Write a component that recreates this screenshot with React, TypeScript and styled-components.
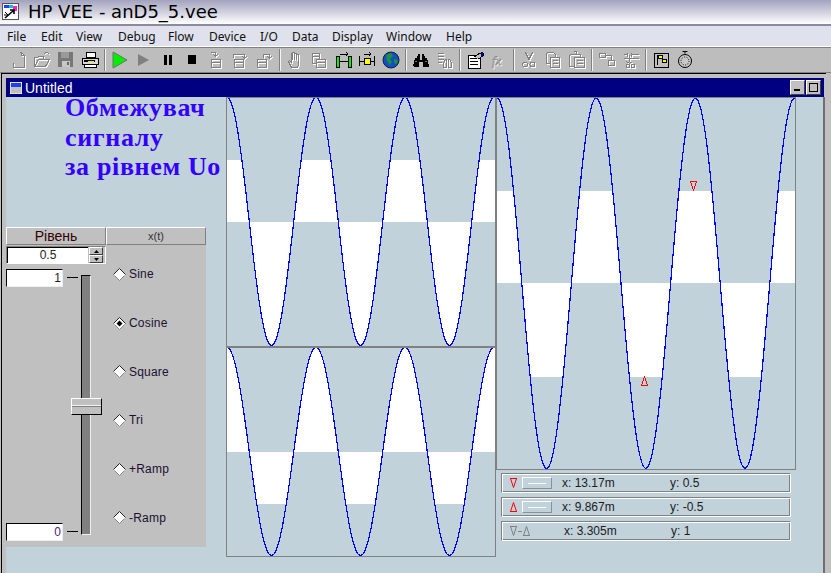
import React from 'react'
import styled, { createGlobalStyle } from 'styled-components'

const GlobalStyle = createGlobalStyle`
  html, body { margin: 0; padding: 0; background: #c0c0c0; overflow: hidden; }
  body { font-family: "Liberation Sans", Arial, sans-serif; }
`

const Page = styled.div`
  width: 831px;
  height: 573px;
  display: flex;
  flex-direction: column;
  overflow: hidden;
`

const AppTitle = styled.div`
  height: 26px;
  flex: none;
  display: flex;
  align-items: center;
  gap: 9px;
  padding: 0 0 2px 2px;
  box-sizing: border-box;
  background: linear-gradient(#a2a2be, #ffffff);
  border-bottom: 2px solid #8b8b9c;
  font-family: "DejaVu Sans", sans-serif;
  font-size: 18px;
  color: #000;
`

const MenuBar = styled.div`
  height: 20px;
  flex: none;
  display: flex;
  align-items: center;
  padding-left: 7px;
  background: #dfe2ec;
  border-bottom: 1px solid #fff;
  font-family: "Noto Sans", sans-serif;
  font-size: 12px;
  color: #111;
`

const MenuItem = styled.span<{ $w: number }>`
  width: ${(p) => p.$w}px;
`

const ToolBar = styled.div`
  height: 24px;
  flex: none;
  display: flex;
  align-items: center;
  padding-left: 6px;
  background: #bdbdbd;
  border-top: 1px solid #808080;
  border-bottom: 1px solid #808080;
`

const ToolSlot = styled.div<{ $w?: number }>`
  width: ${(p) => p.$w ?? 24.05}px;
  height: 22px;
  display: flex;
  align-items: center;
  justify-content: center;
`

const ToolSep = styled.div`
  width: 1px;
  height: 22px;
  margin: 0 2px;
  background: #808080;
  border-right: 1px solid #f4f4f4;
`

const Frame = styled.div`
  flex: 1;
  display: flex;
  flex-direction: column;
  margin: 0 5px 0 1px;
  padding: 4px 2px 0 4px;
  border-top: 1px solid #000;
  border-left: 1px solid #000;
  background: #c0c0c0;
  min-height: 0;
`

const WindowBar = styled.div`
  height: 19px;
  flex: none;
  display: flex;
  align-items: center;
  padding: 0 3px 0 4px;
  background: #000080;
  color: #fff;
  font-size: 14px;
`

const WindowTitle = styled.span`
  margin-left: 3px;
  flex: 1;
`

const WinButton = styled.div`
  width: 15px;
  height: 15px;
  box-sizing: border-box;
  margin-left: 1px;
  display: flex;
  align-items: center;
  justify-content: center;
  background: #c0c0c0;
  border: 1px solid;
  border-color: #fff #404040 #404040 #fff;
`

const Canvas = styled.div`
  flex: 1;
  min-height: 0;
  display: flex;
  background: #c2d2da;
  margin-right: -1px;
  border-right: 2px solid #6f6f6f;
`

const LeftColumn = styled.div`
  width: 220px;
  flex: none;
  display: flex;
  flex-direction: column;
`

const Heading = styled.div`
  height: 134px;
  margin-top: -4px;
  padding-left: 59px;
  font-family: "Liberation Serif", serif;
  font-weight: bold;
  font-size: 26px;
  line-height: 29.5px;
  letter-spacing: 0.65px;
  color: #3300ff;
  white-space: nowrap;
`

const Panel = styled.div`
  width: 200px;
  height: 320px;
  background: #c0c0c0;
  display: flex;
  flex-direction: column;
`

const PanelHead = styled.div`
  display: flex;
  height: 18px;
  flex: none;
`

const HeadCell = styled.div<{ $dim?: boolean }>`
  width: 100px;
  box-sizing: border-box;
  display: flex;
  align-items: center;
  justify-content: center;
  border: 1px solid;
  border-color: #fff #808080 #808080 #fff;
  font-size: ${(p) => (p.$dim ? 11 : 14)}px;
  color: ${(p) => (p.$dim ? '#333' : '#300')};
`

const PanelBody = styled.div`
  flex: 1;
  display: flex;
`

const LevelColumn = styled.div`
  width: 100px;
  padding-top: 1px;
`

const Spinner = styled.div`
  width: 100px;
  height: 18px;
  box-sizing: border-box;
  display: flex;
  border: 1px solid #fff;
  border-color: #808080 #fff #fff #808080;
`

const SpinValue = styled.div`
  flex: 1;
  background: #fff;
  border-top: 1px solid #000;
  border-left: 1px solid #000;
  text-align: center;
  font-size: 12px;
  line-height: 15px;
  color: #222;
`

const SpinButtons = styled.div`
  width: 14px;
  margin-left: 1px;
  margin-right: 2px;
  display: flex;
  flex-direction: column;
`

const SpinButton = styled.div`
  flex: 1;
  background: #c0c0c0;
  border: 1px solid;
  border-color: #fff #404040 #404040 #fff;
  display: flex;
  align-items: center;
  justify-content: center;
`

const SliderRow = styled.div`
  display: flex;
  height: 272px;
  margin-top: 5px;
`

const BoundsColumn = styled.div`
  width: 57px;
  display: flex;
  flex-direction: column;
  justify-content: space-between;
`

const BoundInput = styled.div<{ $pink?: boolean }>`
  height: 18px;
  box-sizing: border-box;
  background: #fff;
  border: 1px solid;
  border-color: #000 #eee #eee #000;
  text-align: right;
  padding-right: 1px;
  font-size: 12px;
  line-height: 16px;
  color: ${(p) => (p.$pink ? '#502080' : '#222')};
`

const TickColumn = styled.div`
  width: 11px;
  margin-left: 4px;
  padding: 8px 0 9px;
  display: flex;
  flex-direction: column;
  justify-content: space-between;
`

const Tick = styled.div`
  height: 1px;
  background: #000;
`

const Track = styled.div`
  position: relative;
  width: 10px;
  height: 260px;
  margin: 6px 0 0 3px;
  box-sizing: border-box;
  background: #808080;
  border: 1px solid;
  border-color: #000 #f0f0f0 #f0f0f0 #000;
`

const Thumb = styled.div`
  position: absolute;
  left: -11px;
  top: 122px;
  width: 31px;
  height: 17px;
  box-sizing: border-box;
  background: linear-gradient(#c0c0c0 6px, #f4f4f4 6px, #f4f4f4 7px, #808080 7px, #808080 8px, #c0c0c0 8px);
  border: 1px solid;
  border-color: #fff #000 #000 #fff;
`

const RadioColumn = styled.div`
  width: 100px;
  padding-top: 5px;
  display: flex;
  flex-direction: column;
`

const RadioRow = styled.div`
  height: 48.7px;
  display: flex;
  align-items: center;
  padding-left: 7px;
  gap: 3px;
  font-size: 12px;
  letter-spacing: 0.2px;
  color: #1a1030;
`

const MiddleColumn = styled.div`
  width: 270px;
  flex: none;
  display: flex;
  flex-direction: column;
`

const PlotBox = styled.div`
  box-sizing: border-box;
  border: 1px solid #808080;
  flex: none;
`

const PlotSvg = styled.svg`
  display: block;
  overflow: hidden;
`

const RightColumn = styled.div`
  width: 300px;
  flex: none;
  display: flex;
  flex-direction: column;
`

const MarkerList = styled.div`
  display: flex;
  flex-direction: column;
  gap: 4px;
  margin: 3px 0 0 5px;
`

const MarkerRow = styled.div`
  width: 290px;
  height: 20px;
  box-sizing: border-box;
  display: flex;
  align-items: center;
  border: 1px solid;
  border-color: #808080 #fff #fff #808080;
  box-shadow: inset 0 1px 0 #fff, inset 1px 0 0 #fff, inset -1px 0 0 #808080, inset 0 -1px 0 #808080;
  font-size: 12px;
  color: #1c1c1c;
`

const MarkerIcon = styled.div<{ $w: number }>`
  width: ${(p) => p.$w}px;
  margin-left: 7px;
  display: flex;
  align-items: center;
  flex: none;
`

const MarkerButton = styled.div`
  width: 30px;
  height: 12px;
  box-sizing: border-box;
  margin-left: 2px;
  margin-right: 10px;
  display: flex;
  align-items: center;
  justify-content: center;
  border: 1px solid;
  border-color: #fff #8a9098 #8a9098 #fff;
`

const MarkerDash = styled.div`
  width: 18px;
  height: 1px;
  background: #fff;
`

const MarkerValue = styled.span<{ $w: number }>`
  width: ${(p) => p.$w}px;
  flex: none;
`

type CurveProps = {
  w: number
  h: number
  period: number
  zero: number
  amp: number
  clipTop: number
  clipBottom: number
  id: string
  children?: React.ReactNode
}

function Curve({ w, h, period, zero, amp, clipTop, clipBottom, id, children }: CurveProps) {
  const pts: string[] = []
  for (let x = 0; x <= w; x += 1) {
    const y = zero - amp * Math.cos((2 * Math.PI * x) / period)
    pts.push(`${x},${y.toFixed(1)}`)
  }
  const line = pts.join(' ')
  return (
    <PlotSvg width={w} height={h} viewBox={`0 0 ${w} ${h}`}>
      <clipPath id={id}>
        <rect x="0" y={clipTop} width={w} height={clipBottom - clipTop} />
      </clipPath>
      <polygon points={`${line} ${w},${zero} 0,${zero}`} fill="#fff" clipPath={`url(#${id})`} shapeRendering="crispEdges" />
      <polyline points={line} fill="none" stroke="#0000ff" strokeWidth="1.2" shapeRendering="crispEdges" />
      {children}
    </PlotSvg>
  )
}

function Radio({ on }: { on?: boolean }) {
  return (
    <svg width="13" height="13" viewBox="0 0 13 13">
      <polygon points="6.5,0.5 12.5,6.5 6.5,12.5 0.5,6.5" fill="#fff" />
      <polyline points="0.5,6.5 6.5,0.5 12.5,6.5" fill="none" stroke="#222" />
      <polyline points="1.5,7.5 6.5,12.5 11.5,7.5" fill="none" stroke="#8a8a8a" />
      {on && <polygon points="6.5,3.5 9.5,6.5 6.5,9.5 3.5,6.5" fill="#000" />}
    </svg>
  )
}

// disabled toolbar pictures: a white copy behind a grey one
function Etched({ children }: { children: React.ReactNode }) {
  return (
    <svg width="22" height="22" viewBox="0 0 22 22" fill="none" strokeWidth="1" shapeRendering="crispEdges">
      <g stroke="#fff" transform="translate(1 1)">{children}</g>
      <g stroke="#808080">{children}</g>
    </svg>
  )
}

function Pic({ children }: { children: React.ReactNode }) {
  return (
    <svg width="22" height="22" viewBox="0 0 22 22" fill="none" shapeRendering="crispEdges">
      {children}
    </svg>
  )
}

const toolGroups: React.ReactNode[][] = [
  [
    <Etched><path d="M12.5 3.5h2l3 3v12h-11v-5" /><path d="M14.5 3.5v3h3" /></Etched>,
    <Etched><path d="M3.5 17.5v-9h3l1-1h5v2M3.5 17.5h11l4-7h-11l-4 7" /><path d="M12.5 5.5l2-2h2l2 2" /></Etched>,
    <Pic><rect x="3" y="3" width="15" height="15" fill="#777" /><rect x="6" y="3" width="8" height="6" fill="#9a9a9a" /><rect x="7" y="12" width="8" height="6" fill="#c8c8c8" /><rect x="12" y="13" width="2" height="3" fill="#666" /></Pic>,
    <Pic><path d="M7 3h9v5H7z" fill="#fff" stroke="#000" /><path d="M3 9h16v6H3z" fill="#d8d8d8" stroke="#000" /><path d="M5 15h12v3H5z" fill="#fff" stroke="#000" /><path d="M5 11h11v2H5z" fill="#000" /><path d="M9 12h6v1H9z" fill="#ffe000" /></Pic>,
  ],
  [
    <svg width="22" height="22" viewBox="0 0 22 22"><polygon points="4,3 18,11 4,19" fill="#00f000" stroke="#707070" /></svg>,
    <svg width="22" height="22" viewBox="0 0 22 22"><polygon points="5,5 16,11 5,17" fill="#808080" /></svg>,
    <Pic><rect x="7" y="6" width="3" height="10" fill="#000" /><rect x="12" y="6" width="3" height="10" fill="#000" /></Pic>,
    <Pic><rect x="7" y="6" width="8" height="9" fill="#000" /></Pic>,
    <Etched><path d="M5.5 3.5h5v3M8.5 5.5l2 2 2-2" /><path d="M6.5 10.5h9v8h-9zM6.5 13.5h9" /></Etched>,
    <Etched><path d="M4.5 8.5v-3h11v4M13.5 7.5l2 2 2-2" /><path d="M5.5 10.5h9v8h-9zM5.5 13.5h9" /></Etched>,
    <Etched><path d="M10.5 8.5v-3h6v3M14.5 7.5l2 2 2-2" /><path d="M4.5 10.5h9v8h-9zM4.5 13.5h9" /></Etched>,
  ],
  [
    <Etched><path d="M7.5 18.5l-3-6 1-1 2 2v-9h1v6-7h2v7-6h2v6-5h2v10l-1 3z" /></Etched>,
    <Etched><path d="M4.5 4.5h7v3h-7zM4.5 7.5v7h3M8.5 10.5h9v8h-9zM8.5 13.5h9M11.5 7.5v3" /></Etched>,
    <Pic><path d="M4 11V7h3v11H4zM16 7h3v11h-3z" fill="#00f000" stroke="#000" /><path d="M7 12h9M8 5h8M14 3l2 2-2 2" stroke="#000" /></Pic>,
    <Pic><path d="M3 7v10M18 7v10" stroke="#000" /><rect x="8" y="9" width="6" height="6" fill="#ffff00" stroke="#000" /><path d="M3 12h5M14 12h4M8 5h7M13 3l2 2-2 2" stroke="#000" /></Pic>,
    <svg width="22" height="22" viewBox="0 0 22 22"><circle cx="11" cy="11" r="8" fill="#1050c0" stroke="#102040" /><path d="M6 6l5-2 2 3-3 3 2 3-2 3-3-4zM14 10l4 1-1 4-3-1z" fill="#209040" /></svg>,
  ],
  [
    <Pic><path d="M3 17l2-8h2l1-4h2v6h2V5h2l1 4h2l2 8-1 1h-5v-5h-4v5H4z" fill="#000" /><path d="M5 12h2M15 12h2" stroke="#777" /></Pic>,
    <Etched><path d="M3.5 4.5h6M3.5 7.5h6M3.5 10.5h6M3.5 13.5h4" /><path d="M9.5 18.5v-5l2-3h1v8zM14.5 18.5v-8h1l2 3v5z" /></Etched>,
  ],
  [
    <Pic><path d="M4 6h12v13H4z" fill="#fff" stroke="#000" /><path d="M6 9h8M6 12h8M6 15h8" stroke="#000" /><path d="M10 8l6-4h3v3l-5 3" fill="#c0c0c0" stroke="#000" /><rect x="17" y="3" width="2" height="5" fill="#000080" /></Pic>,
    <Etched><text x="4" y="16" fontFamily='"Liberation Serif", serif' fontStyle="italic" fontSize="13" strokeWidth="0.5">fx</text></Etched>,
  ],
  [
    <Etched><path d="M7.5 3.5l4 8M14.5 3.5l-4 8" /><circle cx="7" cy="15.5" r="2.5" /><circle cx="14.5" cy="15.5" r="2.5" /></Etched>,
    <Etched><path d="M4.5 3.5h7l2 2v3M4.5 3.5v11h4M8.5 8.5h9v10h-9zM10.5 11.5h5M10.5 14.5h5" /></Etched>,
    <Etched><path d="M3.5 5.5h11v3M3.5 5.5v12h4M7.5 2.5h3v3M8.5 8.5h10v10h-10zM10.5 11.5h6M10.5 14.5h6" /></Etched>,
  ],
  [
    <Etched><path d="M3.5 4.5h6v4h-6zM9.5 6.5h6v5M12.5 11.5h6v5h-6z" /></Etched>,
    <Etched><path d="M3.5 5.5h4M11.5 5.5h7M7.5 3.5v4M11.5 3.5v4M3.5 9.5h15M9.5 5.5v7M6.5 12.5l3 2 3-2" /><circle cx="8" cy="17" r="2" /><circle cx="13" cy="17" r="2" /></Etched>,
  ],
  [
    <Pic><rect x="4" y="4" width="14" height="14" fill="#c0c0c0" stroke="#000" /><path d="M7 6v10" stroke="#000" /><rect x="8" y="6" width="4" height="3" fill="#ffff00" stroke="#000" /><rect x="12" y="10" width="4" height="3" fill="#ffff00" stroke="#000" /></Pic>,
    <svg width="22" height="22" viewBox="0 0 22 22"><path d="M8.5 2.5h5M11 2.5v2" stroke="#000" fill="none" /><circle cx="11" cy="12" r="6.5" fill="#c8c8c8" stroke="#000" /><circle cx="11" cy="12" r="4" fill="none" stroke="#000" strokeDasharray="1 1.5" /></svg>,
  ],
]

const menus: [string, number][] = [
  ['File', 34], ['Edit', 35], ['View', 42], ['Debug', 50], ['Flow', 41], ['Device', 51], ['I/O', 32],
  ['Data', 40], ['Display', 54], ['Window', 60], ['Help', 40],
]

const waves = ['Sine', 'Cosine', 'Square', 'Tri', '+Ramp', '-Ramp']

function DownMark({ color }: { color: string }) {
  return (
    <svg width="9" height="12" viewBox="0 0 9 12">
      <path d="M1 1.5h7M1.5 1.5l3 9 3-9" fill="none" stroke={color} />
    </svg>
  )
}

function UpMark({ color }: { color: string }) {
  return (
    <svg width="9" height="12" viewBox="0 0 9 12">
      <path d="M1 10.5h7M1.5 10.5l3-9 3 9" fill="none" stroke={color} />
    </svg>
  )
}

export default function App() {
  return (
    <Page>
      <GlobalStyle />
      <AppTitle>
        <svg width="17" height="17" viewBox="0 0 17 17">
          <rect x="0.5" y="0.5" width="16" height="16" fill="#fff" stroke="#555" />
          <path d="M2 2h5v3H2z" fill="#2040ff" />
          <path d="M7 2h4v3H7z" fill="#00c8c8" />
          <path d="M11 3h4v5h-4z" fill="#ff20c0" />
          <path d="M3 15l8-7M8 7h4v4" stroke="#000" strokeWidth="1.6" fill="none" />
          <path d="M3 9l3 3M2 12h4" stroke="#000" fill="none" />
        </svg>
        HP VEE - anD5_5.vee
      </AppTitle>
      <MenuBar>
        {menus.map(([label, w]) => (
          <MenuItem key={label} $w={w}>{label}</MenuItem>
        ))}
      </MenuBar>
      <ToolBar>
        {toolGroups.map((group, i) => (
          <React.Fragment key={i}>
            {i > 0 && <ToolSep />}
            {group.map((icon, j) => (
              <ToolSlot key={j}>{icon}</ToolSlot>
            ))}
          </React.Fragment>
        ))}
      </ToolBar>
      <Frame>
        <WindowBar>
          <svg width="12" height="12" viewBox="0 0 12 12">
            <rect x="0" y="0" width="12" height="12" fill="#c0c0c0" stroke="#fff" />
            <rect x="1" y="1" width="10" height="4" fill="#2040ff" />
          </svg>
          <WindowTitle>Untitled</WindowTitle>
          <WinButton>
            <svg width="9" height="9" viewBox="0 0 9 9"><rect x="1" y="6" width="6" height="2" fill="#000" /></svg>
          </WinButton>
          <WinButton>
            <svg width="11" height="11" viewBox="0 0 11 11"><rect x="1.5" y="1.5" width="8" height="8" fill="none" stroke="#000" /></svg>
          </WinButton>
        </WindowBar>
        <Canvas>
          <LeftColumn>
            <Heading>
              Обмежувач<br />сигналу<br />за рівнем Uo
            </Heading>
            <Panel>
              <PanelHead>
                <HeadCell>Рівень</HeadCell>
                <HeadCell $dim>x(t)</HeadCell>
              </PanelHead>
              <PanelBody>
                <LevelColumn>
                  <Spinner>
                    <SpinValue>0.5</SpinValue>
                    <SpinButtons>
                      <SpinButton>
                        <svg width="5" height="3" viewBox="0 0 5 3"><polygon points="2.5,0 5,3 0,3" fill="#000" /></svg>
                      </SpinButton>
                      <SpinButton>
                        <svg width="5" height="3" viewBox="0 0 5 3"><polygon points="0,0 5,0 2.5,3" fill="#000" /></svg>
                      </SpinButton>
                    </SpinButtons>
                  </Spinner>
                  <SliderRow>
                    <BoundsColumn>
                      <BoundInput>1</BoundInput>
                      <BoundInput $pink>0</BoundInput>
                    </BoundsColumn>
                    <TickColumn>
                      <Tick />
                      <Tick />
                    </TickColumn>
                    <Track>
                      <Thumb />
                    </Track>
                  </SliderRow>
                </LevelColumn>
                <RadioColumn>
                  {waves.map((w) => (
                    <RadioRow key={w}>
                      <Radio on={w === 'Cosine'} />
                      {w}
                    </RadioRow>
                  ))}
                </RadioColumn>
              </PanelBody>
            </Panel>
          </LeftColumn>
          <MiddleColumn>
            <PlotBox>
              <Curve id="p1" w={268} h={248} period={89} zero={123.5} amp={124} clipTop={62} clipBottom={248} />
            </PlotBox>
            <PlotBox>
              <Curve id="p2" w={268} h={208} period={89} zero={103.5} amp={104} clipTop={0} clipBottom={156} />
            </PlotBox>
          </MiddleColumn>
          <RightColumn>
            <PlotBox>
              <Curve id="p3" w={298} h={371} period={99.2} zero={185.3} amp={185} clipTop={93} clipBottom={279}>
                <path d="M193 83.5h7M193.5 84l3 8 3-8" fill="none" stroke="#ff0000" shapeRendering="crispEdges" />
                <path d="M144 287.5h7M144.5 287l3-8 3 8" fill="none" stroke="#ff0000" shapeRendering="crispEdges" />
              </Curve>
            </PlotBox>
            <MarkerList>
              <MarkerRow>
                <MarkerIcon $w={11}><DownMark color="#ff0000" /></MarkerIcon>
                <MarkerButton><MarkerDash /></MarkerButton>
                <MarkerValue $w={108}>x: 13.17m</MarkerValue>
                <MarkerValue $w={80}>y: 0.5</MarkerValue>
              </MarkerRow>
              <MarkerRow>
                <MarkerIcon $w={11}><UpMark color="#ff0000" /></MarkerIcon>
                <MarkerButton><MarkerDash /></MarkerButton>
                <MarkerValue $w={108}>x: 9.867m</MarkerValue>
                <MarkerValue $w={80}>y: -0.5</MarkerValue>
              </MarkerRow>
              <MarkerRow>
                <MarkerIcon $w={55}>
                  <DownMark color="#808080" />
                  <svg width="4" height="12" viewBox="0 0 4 12"><path d="M0 6.5h4" stroke="#808080" /></svg>
                  <UpMark color="#808080" />
                </MarkerIcon>
                <MarkerValue $w={107}>x: 3.305m</MarkerValue>
                <MarkerValue $w={80}>y: 1</MarkerValue>
              </MarkerRow>
            </MarkerList>
          </RightColumn>
        </Canvas>
      </Frame>
    </Page>
  )
}
